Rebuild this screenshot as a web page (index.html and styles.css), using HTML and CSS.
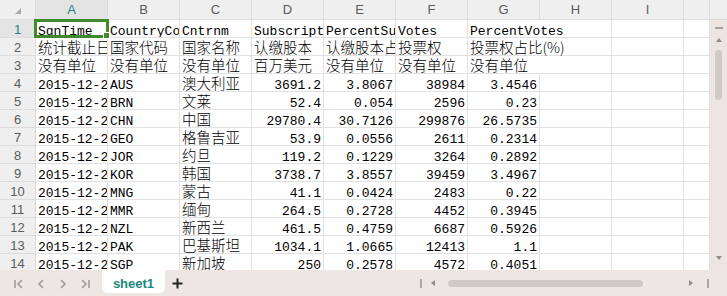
FILE: index.html
```html
<!DOCTYPE html>
<html lang="zh">
<head>
    <meta charset="UTF-8">
    <title>sheet1</title>
    <link rel="stylesheet" href="styles.css">
</head>
<body>

<div class="sheet">
    <!-- Cell grid + vertical scrollbar -->
    <div class="grid">
        <table class="cells">
            <colgroup>
                <col class="c-rh">
                <col class="c"><col class="c"><col class="c"><col class="c"><col class="c">
                <col class="c"><col class="c"><col class="c"><col class="c">
                <col class="c-j">
            </colgroup>
            <thead>
                <tr>
                    <th class="corner"><span class="tri"></span></th>
                    <th class="sel">A</th><th>B</th><th>C</th><th>D</th><th>E</th>
                    <th>F</th><th>G</th><th>H</th><th>I</th><th></th>
                </tr>
            </thead>
            <tbody>
                <tr>
                    <td class="rh sel">1</td>
                    <td>SgnTime</td><td>CountryCode</td><td>Cntrnm</td><td>SubscriptionAmount</td>
                    <td>PercentSubscription</td><td>Votes</td><td class="spill">PercentVotes</td>
                    <td></td><td></td><td></td>
                </tr>
                <tr>
                    <td class="rh">2</td>
                    <td><span class="zh">统计截止日期</span></td><td><span class="zh">国家代码</span></td>
                    <td><span class="zh">国家名称</span></td><td><span class="zh">认缴股本</span></td>
                    <td><span class="zh">认缴股本占比(%)</span></td><td><span class="zh">投票权</span></td>
                    <td class="spill"><span class="zh">投票权占比(%)</span></td>
                    <td></td><td></td><td></td>
                </tr>
                <tr>
                    <td class="rh">3</td>
                    <td><span class="zh">没有单位</span></td><td><span class="zh">没有单位</span></td>
                    <td><span class="zh">没有单位</span></td><td><span class="zh">百万美元</span></td>
                    <td><span class="zh">没有单位</span></td><td><span class="zh">没有单位</span></td>
                    <td class="spill"><span class="zh">没有单位</span></td>
                    <td></td><td></td><td></td>
                </tr>
                <tr>
                    <td class="rh">4</td>
                    <td>2015-12-25</td><td>AUS</td><td><span class="zh">澳大利亚</span></td>
                    <td class="n">3691.2</td><td class="n">3.8067</td><td class="n">38984</td><td class="n">3.4546</td>
                    <td></td><td></td><td></td>
                </tr>
                <tr>
                    <td class="rh">5</td>
                    <td>2015-12-25</td><td>BRN</td><td><span class="zh">文莱</span></td>
                    <td class="n">52.4</td><td class="n">0.054</td><td class="n">2596</td><td class="n">0.23</td>
                    <td></td><td></td><td></td>
                </tr>
                <tr>
                    <td class="rh">6</td>
                    <td>2015-12-25</td><td>CHN</td><td><span class="zh">中国</span></td>
                    <td class="n">29780.4</td><td class="n">30.7126</td><td class="n">299876</td><td class="n">26.5735</td>
                    <td></td><td></td><td></td>
                </tr>
                <tr>
                    <td class="rh">7</td>
                    <td>2015-12-25</td><td>GEO</td><td><span class="zh">格鲁吉亚</span></td>
                    <td class="n">53.9</td><td class="n">0.0556</td><td class="n">2611</td><td class="n">0.2314</td>
                    <td></td><td></td><td></td>
                </tr>
                <tr>
                    <td class="rh">8</td>
                    <td>2015-12-25</td><td>JOR</td><td><span class="zh">约旦</span></td>
                    <td class="n">119.2</td><td class="n">0.1229</td><td class="n">3264</td><td class="n">0.2892</td>
                    <td></td><td></td><td></td>
                </tr>
                <tr>
                    <td class="rh">9</td>
                    <td>2015-12-25</td><td>KOR</td><td><span class="zh">韩国</span></td>
                    <td class="n">3738.7</td><td class="n">3.8557</td><td class="n">39459</td><td class="n">3.4967</td>
                    <td></td><td></td><td></td>
                </tr>
                <tr>
                    <td class="rh">10</td>
                    <td>2015-12-25</td><td>MNG</td><td><span class="zh">蒙古</span></td>
                    <td class="n">41.1</td><td class="n">0.0424</td><td class="n">2483</td><td class="n">0.22</td>
                    <td></td><td></td><td></td>
                </tr>
                <tr>
                    <td class="rh">11</td>
                    <td>2015-12-25</td><td>MMR</td><td><span class="zh">缅甸</span></td>
                    <td class="n">264.5</td><td class="n">0.2728</td><td class="n">4452</td><td class="n">0.3945</td>
                    <td></td><td></td><td></td>
                </tr>
                <tr>
                    <td class="rh">12</td>
                    <td>2015-12-25</td><td>NZL</td><td><span class="zh">新西兰</span></td>
                    <td class="n">461.5</td><td class="n">0.4759</td><td class="n">6687</td><td class="n">0.5926</td>
                    <td></td><td></td><td></td>
                </tr>
                <tr>
                    <td class="rh">13</td>
                    <td>2015-12-25</td><td>PAK</td><td><span class="zh">巴基斯坦</span></td>
                    <td class="n">1034.1</td><td class="n">1.0665</td><td class="n">12413</td><td class="n">1.1</td>
                    <td></td><td></td><td></td>
                </tr>
                <tr>
                    <td class="rh">14</td>
                    <td>2015-12-25</td><td>SGP</td><td><span class="zh">新加坡</span></td>
                    <td class="n">250</td><td class="n">0.2578</td><td class="n">4572</td><td class="n">0.4051</td>
                    <td></td><td></td><td></td>
                </tr>
            </tbody>
        </table>

        <div class="vscroll">
            <div class="vscroll-head"></div>
            <div class="vscroll-track">
                <span class="vs-min"></span>
                <span class="arrow-up"></span>
                <span class="vs-thumb"></span>
                <span class="arrow-down"></span>
            </div>
        </div>

        <!-- Active cell A1 -->
        <div class="cursor"><span class="handle"></span></div>
    </div>

    <!-- Sheet tabs + horizontal scrollbar -->
    <div class="tabbar">
        <div class="nav">
            <svg class="nav-btn" viewBox="0 0 22 12"><path d="M7 2v8M14 2l-4 4 4 4"/></svg>
            <svg class="nav-btn" viewBox="0 0 22 12"><path d="M13 2l-4 4 4 4"/></svg>
            <svg class="nav-btn" viewBox="0 0 22 12"><path d="M9 2l4 4-4 4"/></svg>
            <svg class="nav-btn" viewBox="0 0 22 12"><path d="M8 2l4 4-4 4M15 2v8"/></svg>
        </div>
        <div class="tab">sheet1</div>
        <svg class="add" viewBox="0 0 11 11"><path d="M5.5 0.5v10M0.5 5.5h10"/></svg>

        <div class="hscroll">
            <span class="hs-bar"></span>
            <span class="arrow-left"></span>
            <span class="hs-thumb"></span>
            <span class="arrow-right"></span>
            <span class="hs-bar last"></span>
        </div>
    </div>
</div>

</body>
</html>
```

FILE: styles.css
```css
body {
    margin: 0;
    background: #ffffff;
}

.sheet {
    width: 727px;
    height: 296px;
    display: flex;
    flex-direction: column;
    overflow: hidden;
}

/* Grid area */
.grid {
    position: relative;
    display: flex;
    height: 270px;
    overflow: hidden;
}

.cells {
    width: 710px;
    table-layout: fixed;
    border-collapse: separate;
    border-spacing: 0;
    background: #ffffff;
    flex: none;
}

.c-rh { width: 36px; }
.c { width: 72px; }
.c-j { width: 26px; }

.cells th {
    height: 19px;
    padding: 0;
    background: #efefef;
    border-right: 1px solid #dcdcdc;
    border-bottom: 1px solid #dcdcdc;
    font: 13px "Liberation Sans", Arial, sans-serif;
    color: #5b5b5b;
    line-height: 19px;
    text-align: center;
}

.cells th.sel {
    background: #e4e4e4;
    color: #1b877e;
}

.corner .tri {
    display: block;
    width: 0;
    height: 0;
    margin: 3px auto 0;
    border-left: 6px solid transparent;
    border-bottom: 6px solid #a9a9a9;
}

.cells td {
    height: 11px;
    padding: 6px 2px 0;
    border-right: 1px solid #e1e1e1;
    border-bottom: 1px solid #e1e1e1;
    font: 13px "Liberation Mono", "Noto Sans CJK SC", monospace;
    line-height: 11px;
    color: #000000;
    white-space: nowrap;
    overflow: hidden;
    text-overflow: clip;
}

.cells td.n {
    text-align: right;
}

/* text running on into the empty column H */
.cells td.spill {
    overflow: visible;
    border-right-color: transparent;
}

.cells td.rh {
    height: 15px;
    padding: 2px 0 0;
    background: #efefef;
    border-right-color: #dcdcdc;
    border-bottom-color: #dcdcdc;
    font-family: "Liberation Sans", Arial, sans-serif;
    line-height: 15px;
    color: #5b5b5b;
    text-align: center;
}

.cells td.rh.sel {
    background: #e4e4e4;
    color: #1b877e;
}

.zh {
    font-family: "Noto Sans CJK SC", sans-serif;
    font-size: 14.5px;
    font-weight: 300;
    line-height: 4px;
}

/* Selected cell */
.cursor {
    position: absolute;
    left: 34px;
    top: 19px;
    width: 75px;
    height: 19px;
    box-sizing: border-box;
    border: 3px solid #3f8a2d;
}

.cursor .handle {
    position: absolute;
    right: -4px;
    bottom: -4px;
    width: 5px;
    height: 5px;
    background: #3f8a2d;
    border: 1px solid #ffffff;
}

/* Vertical scrollbar */
.vscroll {
    width: 17px;
    display: flex;
    flex-direction: column;
}

.vscroll-head {
    height: 19px;
    background: #efefef;
    border-bottom: 1px solid #dcdcdc;
}

.vscroll-track {
    flex: 1;
    background: #eee5e2;
    display: flex;
    flex-direction: column;
    align-items: center;
}

.vs-min {
    width: 8px;
    height: 2px;
    margin-top: 7px;
    background: #a3a09f;
}

.arrow-up {
    width: 0;
    height: 0;
    margin-top: 9px;
    border-left: 3px solid transparent;
    border-right: 3px solid transparent;
    border-bottom: 4px solid #8f8d8c;
}

.vs-thumb {
    width: 7px;
    height: 50px;
    margin-top: 8px;
    border-radius: 4px;
    background: #cfcac8;
}

.arrow-down {
    width: 0;
    height: 0;
    margin-top: auto;
    margin-bottom: 10px;
    border-left: 3px solid transparent;
    border-right: 3px solid transparent;
    border-top: 4px solid #8f8d8c;
}

/* Tab bar */
.tabbar {
    height: 26px;
    display: flex;
    align-items: flex-start;
    padding-left: 8px;
    background: #eee6e3;
}

.nav {
    display: flex;
}

.nav-btn {
    width: 22px;
    height: 12px;
    margin-top: 8px;
    fill: none;
    stroke: #9c9c9c;
    stroke-width: 1.6;
}

.tab {
    width: 63px;
    height: 23px;
    box-sizing: border-box;
    margin-left: 6px;
    padding-top: 4px;
    background: #ffffff;
    border-radius: 0 0 5px 5px;
    font: bold 13px "Liberation Sans", Arial, sans-serif;
    line-height: 19px;
    color: #17877d;
    text-align: center;
}

.add {
    width: 11px;
    height: 11px;
    margin: 8px 0 0 7px;
    fill: none;
    stroke: #222222;
    stroke-width: 2;
}

.hscroll {
    margin-left: auto;
    align-self: stretch;
    display: flex;
    align-items: center;
    padding-right: 18px;
}

.hs-bar {
    width: 2px;
    height: 9px;
    background: #aaa7a6;
}

.hs-bar.last {
    margin-left: 14px;
}

.arrow-left {
    width: 0;
    height: 0;
    margin-left: 9px;
    border-top: 3px solid transparent;
    border-bottom: 3px solid transparent;
    border-right: 4px solid #8f8d8c;
}

.hs-thumb {
    width: 195px;
    height: 7px;
    margin-left: 13px;
    border-radius: 4px;
    background: #cfcac8;
}

.arrow-right {
    width: 0;
    height: 0;
    margin-left: 46px;
    border-top: 3px solid transparent;
    border-bottom: 3px solid transparent;
    border-left: 4px solid #8f8d8c;
}
```
